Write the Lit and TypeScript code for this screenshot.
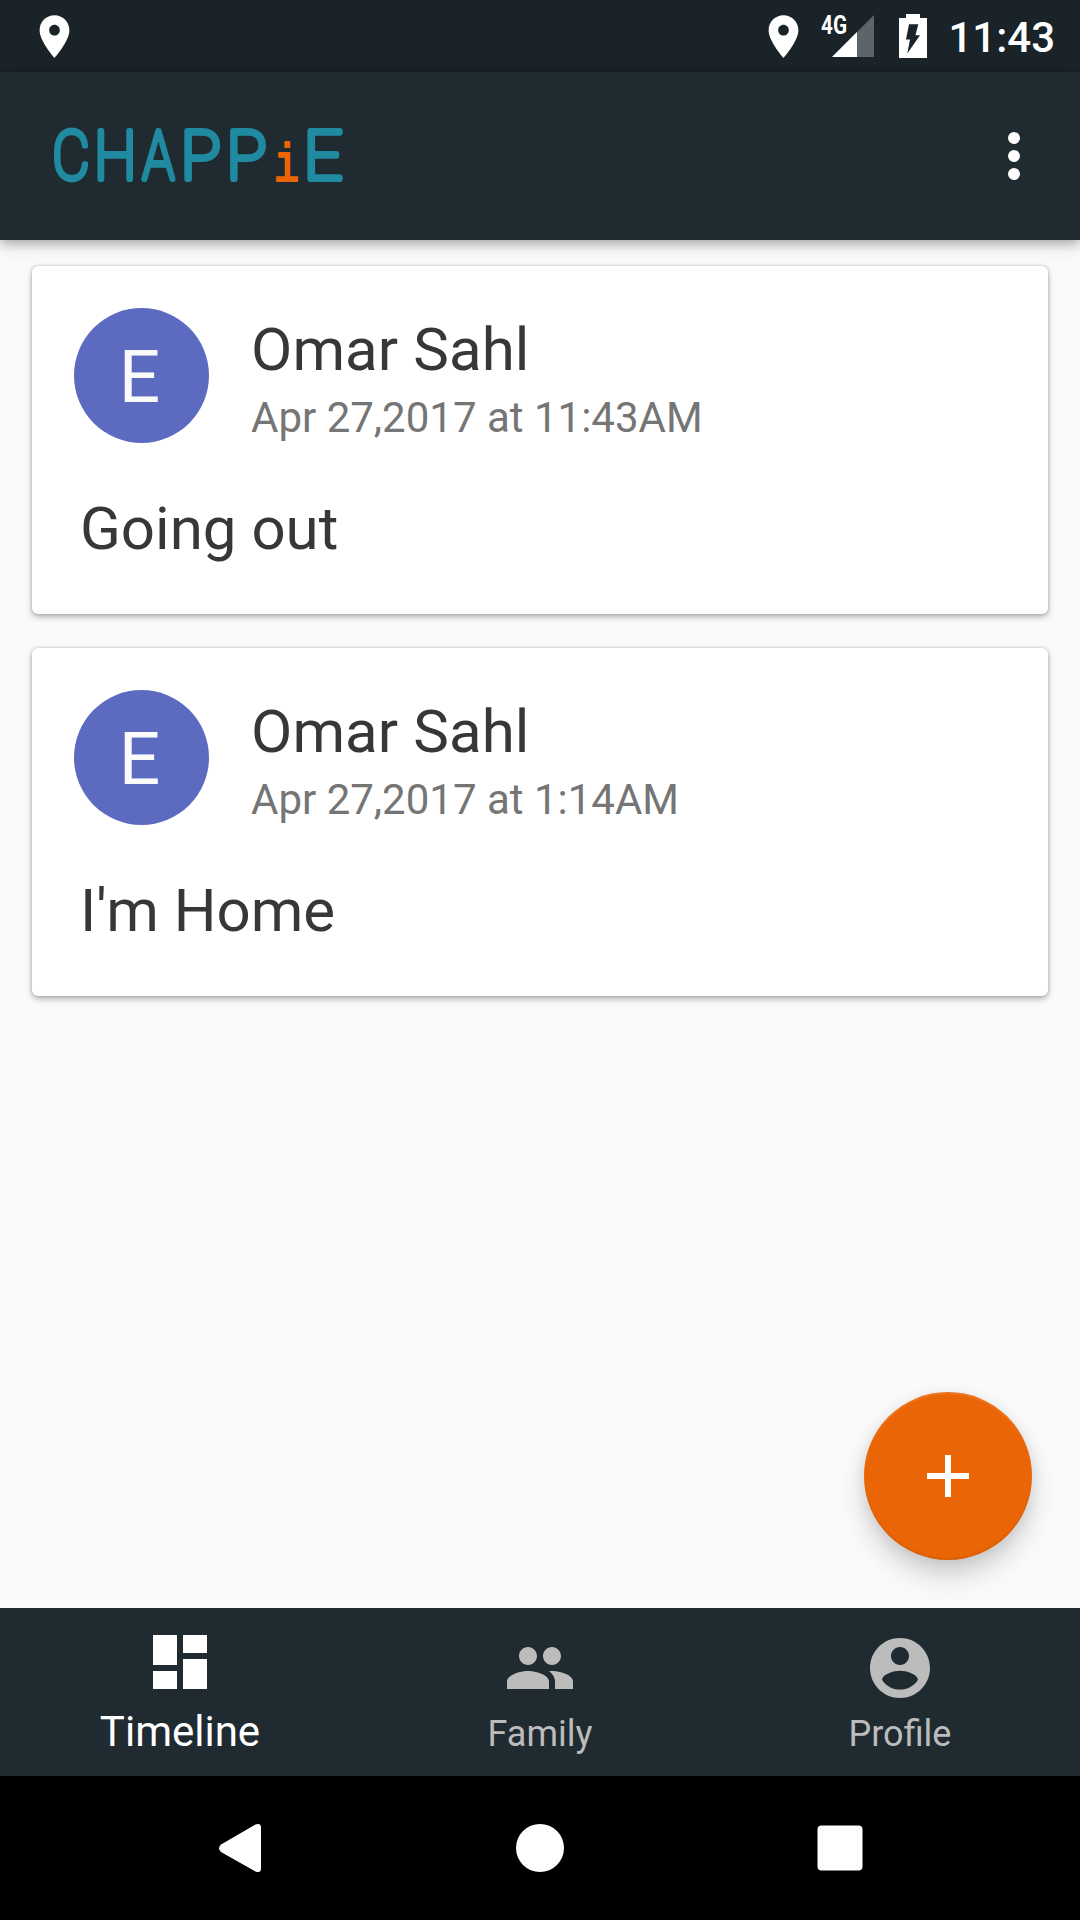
import { LitElement, html, css, svg } from "lit";
import { customElement, property } from "lit/decorators.js";

const PIN = "M12 2C8.130 2 5 5.130 5 9c0 5.250 7 13 7 13s7-7.750 7-13c0-3.870-3.130-7-7-7zm0 9.500c-1.380 0-2.500-1.120-2.500-2.500s1.120-2.500 2.500-2.500 2.500 1.120 2.500 2.500-1.120 2.500-2.500 2.500z";

const pin = html`<svg class="pin" viewBox="0 0 24 24"><path d=${PIN} /></svg>`;

@customElement("status-bar")
class StatusBar extends LitElement {
  static styles = css`
    :host { display: flex; align-items: center; justify-content: space-between; height: 72px; box-sizing: border-box; padding: 0 25px 0 28.500px; background: #192328; color: #fff; }
    svg { display: block; fill: #fff; }
    .pin { width: 51px; height: 51px; }
    .right { display: flex; align-items: center; }
    .signal { width: 54px; height: 72px; margin-left: 11px; }
    .net { font: 700 25px Roboto, sans-serif; }
    .battery { width: 28px; height: 44px; margin-left: 25px; }
    .clock { font: 500 42px/50px Roboto, sans-serif; margin: 3px 0 0 21px; }
  `;
  render() {
    return html`
      ${pin}
      <div class="right">
        ${pin}
        <svg class="signal" viewBox="0 0 54 72">
          <path d="M12 57 L54 15 V57z" fill-opacity=".3" />
          <path d="M12 57 L37 32 V57z" />
          <text class="net" x="1" y="33.500" textLength="26" lengthAdjust="spacingAndGlyphs">4G</text>
        </svg>
        <svg class="battery" viewBox="0 0 28 44">
          <path fill-rule="evenodd" d="M7 0h14v4h7v40H0V4h7z M10 10.300 7 25.500h4L8.300 39.500 21 21.300h-4.500L19.300 10.300z" />
        </svg>
        <div class="clock">11:43</div>
      </div>
    `;
  }
}

@customElement("app-toolbar")
class AppToolbar extends LitElement {
  static styles = css`
    :host { display: flex; align-items: center; justify-content: space-between; height: 168px; box-sizing: border-box; padding: 0 60px 0 50px; background: #1f2b30; box-shadow: 0 4px 10px rgba(0, 0, 0, .26), 0 8px 16px rgba(0, 0, 0, .08); position: relative; }
    svg { display: block; }
    .logo { width: 310px; height: 110px; }
    .letter { font: 100 66.500px Roboto, sans-serif; fill: #208aa0; stroke: #208aa0; stroke-width: 5.800px; stroke-linejoin: round; text-anchor: middle; }
    .accent { font: 400 53px "Liberation Mono", monospace; fill: #eb6506; stroke: #eb6506; stroke-width: 2px; stroke-linejoin: round; text-anchor: middle; }
    .more { width: 12px; height: 48px; fill: #fff; }
  `;
  render() {
    const glyph = (t: string, x: number, s: number) =>
      svg`<text class="letter" transform="translate(${x} 78.200) scale(${s} 1)">${t}</text>`;
    return html`
      <svg class="logo" viewBox="0 0 310 110">
        ${glyph("C", 21, 0.86)}${glyph("H", 65.2, 0.9)}${glyph("A", 108.5, 0.79)}
        ${glyph("P", 150.8, 1)}${glyph("P", 196.4, 1)}${glyph("E", 273, 1.02)}
        <text class="accent" transform="translate(236.500 79.700) scale(.8 1)">i</text>
      </svg>
      <svg class="more" viewBox="0 0 12 48">
        <circle cx="6" cy="6" r="6" /><circle cx="6" cy="24" r="6" /><circle cx="6" cy="42" r="6" />
      </svg>
    `;
  }
}

@customElement("post-card")
class PostCard extends LitElement {
  @property() name = "";
  @property() initial = "";
  @property() date = "";
  @property() message = "";
  static styles = css`
    :host { display: block; height: 348px; box-sizing: border-box; padding: 42px; border-radius: 6px; background: #fff; box-shadow: 0 3px 6px rgba(0, 0, 0, .28), 0 0 3px rgba(0, 0, 0, .22); font-family: Roboto, sans-serif; color: #373737; }
    .head { display: flex; gap: 42px; height: 135px; }
    .avatar { width: 135px; height: 135px; border-radius: 50%; background: #5c6bc0; color: #fafafa; font-size: 73px; line-height: 139px; text-align: center; text-indent: -4px; }
    .name { font-size: 60px; line-height: 70px; margin-top: 7px; letter-spacing: .1px; }
    .date { font-size: 42px; line-height: 50px; color: #757575; margin-top: 8px; }
    .message { font-size: 60px; line-height: 70px; margin: 51px 0 0 6px; }
  `;
  render() {
    return html`
      <div class="head">
        <div class="avatar">${this.initial}</div>
        <div>
          <div class="name">${this.name}</div>
          <div class="date">${this.date}</div>
        </div>
      </div>
      <div class="message">${this.message}</div>
    `;
  }
}

const TABS = [
  { label: "Timeline", active: true, d: "M3 13h8V3H3v10zm0 8h8v-6H3v6zm10 0h8V11h-8v10zm0-18v6h8V3h-8z" },
  { label: "Family", active: false, d: "M16 11c1.660 0 2.990-1.340 2.990-3S17.660 5 16 5c-1.660 0-3 1.340-3 3s1.340 3 3 3zm-8 0c1.660 0 2.990-1.340 2.990-3S9.660 5 8 5C6.340 5 5 6.340 5 8s1.340 3 3 3zm0 2c-2.330 0-7 1.170-7 3.500V19h14v-2.500c0-2.330-4.670-3.500-7-3.500zm8 0c-.290 0-.620.020-.970.050 1.160.840 1.970 1.970 1.970 3.450V19h6v-2.500c0-2.330-4.670-3.500-7-3.500z" },
  { label: "Profile", active: false, d: "M12 2C6.480 2 2 6.480 2 12s4.480 10 10 10 10-4.480 10-10S17.520 2 12 2zm0 3c1.660 0 3 1.340 3 3s-1.340 3-3 3-3-1.340-3-3 1.340-3 3-3zm0 14.200c-2.500 0-4.710-1.280-6-3.220.030-1.990 4-3.080 6-3.080 1.990 0 5.970 1.090 6 3.080-1.290 1.940-3.500 3.220-6 3.220z" },
];

@customElement("tab-bar")
class TabBar extends LitElement {
  static styles = css`
    :host { display: grid; grid-template-columns: repeat(3, 1fr); height: 168px; background: #1f2b30; }
    .tab { display: flex; flex-direction: column; align-items: center; padding-top: 24px; color: #bcbcbc; font: 36px/42px Roboto, sans-serif; }
    .active { padding-top: 18px; color: #fff; font-size: 42px; line-height: 50px; }
    svg { width: 72px; height: 72px; fill: currentColor; flex: none; }
    .label { margin-top: 9px; }
  `;
  render() {
    return html`${TABS.map(
      (t) => html`<div class="tab ${t.active ? "active" : ""}">
        <svg viewBox="0 0 24 24"><path d=${t.d} /></svg>
        <div class="label">${t.label}</div>
      </div>`
    )}`;
  }
}

@customElement("system-nav")
class SystemNav extends LitElement {
  static styles = css`
    :host { display: flex; align-items: center; justify-content: center; gap: 228px; height: 144px; background: #000; }
    svg { width: 72px; height: 72px; fill: #fff; }
  `;
  render() {
    return html`
      <svg viewBox="0 0 72 72"><path d="M57 15.500V56.500Q57 61.500 51.500 59.500L17 40Q13 36.300 17 32.500L51.500 12.500Q57 10.500 57 15.500z" /></svg>
      <svg viewBox="0 0 72 72"><circle cx="36" cy="36" r="24" /></svg>
      <svg viewBox="0 0 72 72"><rect x="13.500" y="13.500" width="45" height="45" rx="4" /></svg>
    `;
  }
}

@customElement("app-root")
class AppRoot extends LitElement {
  static styles = css`
    :host { display: flex; flex-direction: column; width: 1080px; height: 1920px; background: #fafafa; overflow: hidden; }
    .feed { flex: 1; position: relative; display: flex; flex-direction: column; gap: 34px; padding: 26px 32px; }
    .fab { position: absolute; right: 48px; bottom: 48px; width: 168px; height: 168px; border-radius: 50%; background: #ea6506; display: grid; place-items: center; box-shadow: 0 16px 26px rgba(0, 0, 0, .17), 0 2px 14px rgba(0, 0, 0, .08), inset 0 -2px 2px rgba(0, 0, 0, .07), inset 0 2px 2px rgba(255, 255, 255, .12); }
    .plus { width: 42px; height: 42px; fill: #fff; }
  `;
  render() {
    return html`
      <status-bar></status-bar>
      <app-toolbar></app-toolbar>
      <div class="feed">
        <post-card initial="E" name="Omar Sahl" date="Apr 27,2017 at 11:43AM" message="Going out"></post-card>
        <post-card initial="E" name="Omar Sahl" date="Apr 27,2017 at 1:14AM" message="I'm Home"></post-card>
        <div class="fab"><svg class="plus" viewBox="0 0 42 42"><path d="M18 0h6v18h18v6H24v18h-6V24H0v-6h18z" /></svg></div>
      </div>
      <tab-bar></tab-bar>
      <system-nav></system-nav>
    `;
  }
}
